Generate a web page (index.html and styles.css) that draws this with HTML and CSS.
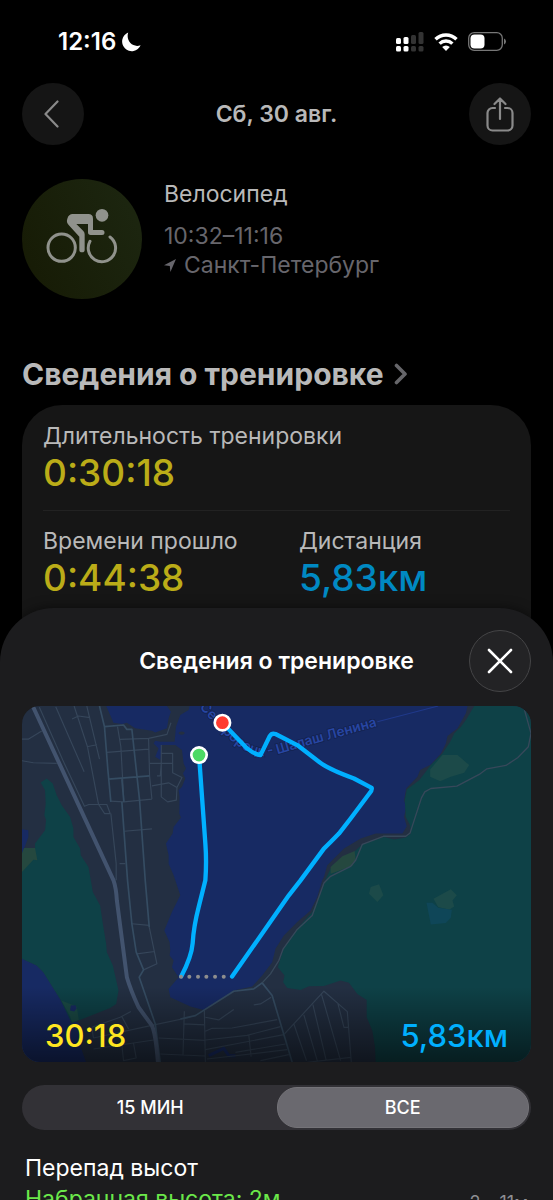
FILE: index.html
```html
<!DOCTYPE html>
<html lang="ru">
<head>
<meta charset="utf-8">
<meta name="viewport" content="width=device-width, initial-scale=1">
<title>Сведения о тренировке</title>
<link rel="stylesheet" href="styles.css">
</head>
<body>
<main class="summary">
  <div class="status">
    <div class="status-time">12:16
      <svg width="20" height="20" viewBox="0 0 20 20" aria-hidden="true"><path d="M7.200.6A9.600 9.600 0 1 0 19.600 13.200C12 16.200 4.500 9 7.200.6Z" fill="#fff"/></svg>
    </div>
    <div class="status-icons">
      <svg width="28" height="20" viewBox="0 0 28 20" aria-hidden="true">
        <g fill="#fff"><rect x="0" y="6" width="5" height="6" rx="1.500"/><rect x="7.500" y="5" width="5" height="7" rx="1.500"/><rect x="0" y="14" width="5" height="5.500" rx="1.500"/><rect x="7.500" y="14" width="5" height="5.500" rx="1.500"/></g>
        <g fill="#333"><rect x="15" y="3" width="5" height="9" rx="1.500"/><rect x="22.500" y="0" width="5" height="12" rx="1.500"/><rect x="15" y="14" width="5" height="5.500" rx="1.500"/><rect x="22.500" y="14" width="5" height="5.500" rx="1.500"/></g>
      </svg>
      <svg width="24" height="18" viewBox="0 0 24 18" aria-hidden="true"><g fill="none" stroke="#fff" stroke-width="3.400"><path d="M1.500 6.300a15 15 0 0 1 21 0"/><path d="M5.600 10.600a9.200 9.200 0 0 1 12.800 0"/></g><path d="M12 18l-3.800-3.900a5.400 5.400 0 0 1 7.600 0Z" fill="#fff"/></svg>
      <svg width="39" height="19" viewBox="0 0 39 19" aria-hidden="true"><rect x=".7" y=".7" width="33.600" height="17.600" rx="5.500" fill="none" stroke="#777" stroke-width="1.300"/><rect x="2.500" y="2.500" width="14" height="14" rx="4" fill="#fff"/><path d="M36 6.500q2 1 2 3t-2 3Z" fill="#777"/></svg>
    </div>
  </div>

  <header class="bar">
    <button class="round" aria-label="Назад"><svg width="18" height="28" viewBox="0 0 18 28"><path d="M13.500 1.500 1.500 14l12 12.500" fill="none" stroke="#8a8a8a" stroke-width="2.200" stroke-linecap="round" stroke-linejoin="round"/></svg></button>
    <h1 class="bar-title dim">Сб, 30 авг.</h1>
    <button class="round" aria-label="Поделиться"><svg width="28" height="35" viewBox="0 0 28 35"><g fill="none" stroke="#8a8a8a" stroke-width="2.200" stroke-linecap="round" stroke-linejoin="round"><path d="M9 11H6.500A5 5 0 0 0 1.500 16v12.500a5 5 0 0 0 5 5h15a5 5 0 0 0 5-5V16a5 5 0 0 0-5-5H19M14 22V1.500M8.500 7 14 1.500 19.500 7"/></g></svg></button>
  </header>

  <section class="activity">
    <div class="badge">
      <svg width="72" height="56" viewBox="77 115 216 166" aria-hidden="true">
        <g fill="none" stroke="#90928c" stroke-width="9" stroke-linecap="round"><circle cx="124" cy="233" r="41"/><path d="M209 214A41 41 0 1 0 269 201"/></g>
        <g fill="#90928c"><circle cx="245" cy="136" r="19"/><path d="M157 132H204Q218 132 218 146V180H245A7.500 7.500 0 0 1 245 195H211Q203 195 203 187V162H168L189 183Q193 187 193 193V239A8 8 0 0 1 177 239V200L145 165Q137 156 141 146Q145 132 157 132Z"/></g>
      </svg>
    </div>
    <div class="activity-text">
      <p class="dim activity-name">Велосипед</p>
      <p>10:32–11:16</p>
      <p class="place"><svg width="12" height="13" viewBox="0 0 12 13" aria-hidden="true"><path d="M12 0 0 6.200l5.800.8.6 6Z" fill="#67666c"/></svg>Санкт-Петербург</p>
    </div>
  </section>

  <h2 class="heading dim">Сведения о тренировке <svg width="14" height="22" viewBox="0 0 14 22" aria-hidden="true"><path d="M2.500 2.500 11 11l-8.500 8.500" fill="none" stroke="#66666a" stroke-width="3.600" stroke-linecap="round" stroke-linejoin="round"/></svg></h2>

  <section class="card">
    <div class="metric metric-wide"><p class="dim">Длительность тренировки</p><p class="value yellow">0:30:18</p></div>
    <div class="metric"><p class="dim">Времени прошло</p><p class="value yellow">0:44:38</p></div>
    <div class="metric"><p class="dim">Дистанция</p><p class="value blue">5,83км</p></div>
  </section>
</main>

<section class="sheet" role="dialog" aria-labelledby="sheet-title">
  <header class="bar">
    <span></span>
    <h2 class="bar-title" id="sheet-title">Сведения о тренировке</h2>
    <button class="round close" aria-label="Закрыть"><svg width="26" height="26" viewBox="0 0 26 26"><path d="M2 2 24 24M24 2 2 24" stroke="#fff" stroke-width="2.600" stroke-linecap="round"/></svg></button>
  </header>

  <div class="map">
    <svg class="map-art" viewBox="0 0 1524 1067" preserveAspectRatio="xMidYMid slice" role="img" aria-label="Маршрут тренировки">
      <defs>
        <linearGradient id="fade" x1="0" y1="0" x2="0" y2="1"><stop offset="0" stop-color="#000" stop-opacity="0"/><stop offset="1" stop-color="#000" stop-opacity=".55"/></linearGradient>
        <path id="ferry" d="M532 6L580 56Q650 140 720 150Q760 148 800 134L1064 60"/>
      </defs>
      <rect width="1524" height="1067" fill="#232f42"/>
      <g fill="#172a63">
        <path d="M502 0L499 12 474 27 461 62 457 107 414 107 399 104 394 112 409 127 399 152 414 162 419 117 459 117 479 132 484 172 491 187 482 202 489 217 479 242 469 252 472 272 471 322 476 334 454 362 451 382 431 412 439 447 439 472 454 507 459 522 474 567 449 617 426 672 442 707 444 732 442 747 454 762 449 782 469 812 439 847 444 872 504 900 544 910 569 897 634 852 689 840 719 807 749 767 759 727 784 687 824 647 864 612 884 572 899 522 904 512 914 477 964 427 1014 397 1059 382 1139 382 1152 360 1144 332 1150 302 1144 282 1150 247 1184 212 1192 192 1224 175 1254 142 1269 112 1274 90 1304 67 1329 22 1334 0Z"/>
        <path d="M252 0L264 27 274 50 299 54 314 50 339 67 389 74 399 79 434 67 439 37 446 17 434 0Z"/>
        <path d="M0 757L44 777 64 797 114 877 144 932 172 950 176 1022 192 1067H0Z"/>
      </g>
      <ellipse cx="478" cy="81" rx="9" ry="5" fill="#232f42"/>
      <g fill="#0e4147">
        <path d="M1354 0L1329 42 1314 62 1294 82 1282 107 1259 142 1224 177 1209 197 1189 222 1152 250 1146 282 1149 332 1162 357 1164 382 1149 394 1114 400 1084 392 1019 414 994 437 929 477 912 512 894 562 869 617 824 667 784 722 766 782 786 807 782 827 794 844 834 850 859 839 904 838 954 822 979 829 1004 862 1032 880 1032 932 1049 972 1057 1022 1059 1067H1524V0Z"/>
        <path d="M74 217L92 232 104 267 119 297 144 332 154 367 154 392 174 427 176 447 199 482 206 522 212 557 234 597 242 652 252 712 254 737 272 777 289 852 282 892 264 904 194 932 149 950 114 877 64 797 44 777 0 757V430L39 432 39 412 69 372 72 342 67 327 71 292 69 252 56 229Z"/>
      </g>
      <path d="M0 369L19 372 19 392 9 420 0 442Z" fill="#172a63"/>
      <path d="M6 425H39L46 462 34 460 14 482 0 497V442Z" fill="#25483f"/>
      <path d="M118 882L144 930 150 948 170 940 164 900Z" fill="#1a4a45"/>
      <path d="M146 897L160 896 164 905 156 915 144 912Z" fill="#172a63"/>
      <g fill="#1c4a49"><path d="M1259 147L1304 147 1339 177 1324 200 1284 212 1252 225 1222 212 1222 190Z"/><path d="M1044 542L1069 534 1082 567 1064 587 1039 562Z"/><path d="M1232 577L1284 549 1302 567 1289 582 1294 600 1279 610 1246 602Z"/></g>
      <path d="M959 450L996 434 999 462 989 479 924 502 924 482Z" fill="#25483f"/>
      <path d="M1211 589L1229 589 1246 604 1287 610 1284 634 1269 650 1224 654Z" fill="#0f4658"/>
      <path d="M559 1047L604 1025 619 1047H639" fill="none" stroke="#172a63" stroke-width="9"/>

      <g fill="none" stroke="#36465a" stroke-width="3.500" stroke-linejoin="round">
        <path d="M52 4L122 162 187 300 200 295 254 295 264 322 247 322 229 294M101 2L186 197M156 0L196 122 229 294M194 0L232 159M150 39L169 30 204 35M194 122L224 116"/>
        <path d="M286 62L296 122 305 287M294 100L379 97 434 85 446 50M254 139L379 129M264 285L305 287 389 279M379 97L382 209 389 279"/>
        <path d="M417 117V272L436 287 462 282 464 244 479 214 451 200V142H417M382 172H451M389 239L439 230 464 244M404 209H414L417 172"/>
        <path d="M306 375L389 368M266 322L282 472V522M292 472H309M329 652L381 657M344 742L397 735M381 662L404 772 364 790"/>
        <path d="M0 99H20L59 75M0 164L34 170 104 172"/>
        <path d="M209 962L294 932 326 915M214 994L399 954 504 932M209 962L214 994M299 930L319 967M214 1027L394 1000M409 994L548 1001M334 1010L342 1054 304 1062 299 1015M414 1042L548 1048M486 914L482 1045M486 952L548 955"/>
        <path d="M546 912L549 1067M549 932L589 940 634 909M549 974L569 965 629 964 764 939M549 1000L674 986 774 960M549 1029L784 984M639 1037L789 1012M554 1057L794 1029M679 985L686 1050M694 895L714 892 746 872M714 1062L799 1044"/>
        <path d="M786 982L904 854 974 915 986 1067M814 952L852 1062M844 925L884 1062M871 894L911 1062M897 864L954 1062M946 892L964 962H977M854 1067L984 1052"/>
      </g>
      <g fill="none" stroke="#354c62" stroke-width="5" stroke-linejoin="round">
        <path d="M232 0L247 62 257 190 266 287M247 62L304 57 314 70H329L352 282 369 522 381 662M259 219L344 212 382 209M299 219L305 287M299 287L316 522 329 652 342 737 364 790 351 812 399 952 414 1067"/>
        <path d="M474 937L519 927 634 854 694 847 719 829 749 867 809 1067"/>
      </g>
      <path d="M1504 10L1524 82 1516 122 1484 155 1449 178 1392 188 1369 205 1302 240 1224 247 1206 257 1196 275 1162 380 1149 390H1082L1019 414 999 462 984 480 924 510 904 530 869 627 824 669 782 727 769 762 744 802 719 829" fill="none" stroke="#37485a" stroke-width="4" stroke-linejoin="round"/>
      <path d="M32 0L274 522Q282 545 284 582L314 812Q325 850 349 902L389 957Q400 980 407 1067" fill="none" stroke="#42536e" stroke-width="12"/>

      <path d="M1064 47L1246 0" stroke="#20398a" stroke-width="3"/>
      <text class="map-label"><textPath href="#ferry" startOffset="100%">Сестрорецк - Шалаш Ленина</textPath></text>

      <g fill="none" stroke="#00b0ff" stroke-width="13" stroke-linecap="round" stroke-linejoin="round">
        <path d="M530 147L549 412Q553 465 549 522L529 602Q514 660 511 710Q508 750 477 809"/>
        <path d="M600 50L674 127Q696 145 714 147L742 90Q748 80 759 84L824 117 889 167Q915 188 994 217L1047 245Q1049 252 1040 262L984 337 949 382Q920 412 904 427L834 522 799 567 764 617 629 810"/>
      </g>
      <g fill="#8e8e8e"><circle cx="476" cy="811" r="6"/><circle cx="501" cy="811" r="6"/><circle cx="527" cy="811" r="6"/><circle cx="552" cy="811" r="6"/><circle cx="578" cy="811" r="6"/><circle cx="604" cy="811" r="6"/></g>
      <g stroke="#fff" stroke-width="8"><circle cx="600" cy="50" r="23" fill="#ff3b30"/><circle cx="530" cy="147" r="23" fill="#4cd964"/></g>
      <rect y="840" width="1524" height="227" fill="url(#fade)"/>
    </svg>
    <div class="map-stats"><span class="map-time">30:18</span><span class="map-distance">5,83км</span></div>
  </div>

  <div class="segments" role="group" aria-label="Период">
    <button class="segment" aria-pressed="false">15 МИН</button>
    <button class="segment selected" aria-pressed="true">ВСЕ</button>
  </div>

  <div class="elevation">
    <h3 class="elevation-title">Перепад высот</h3>
    <div class="elevation-row"><span class="gain">Набранная высота: 2м</span><span class="range">2 – 11м</span></div>
  </div>
</section>
</body>
</html>
```
FILE: styles.css
```css
* { box-sizing: border-box; }

body {
  margin: 0;
  height: 100vh;
  overflow: hidden;
  display: flex;
  flex-direction: column;
  background: #000;
  color: #fff;
  font: 23px/29px Inter, "Noto Sans", sans-serif;
}

h1, h2, h3, p { margin: 0; font: inherit; }
button { border: 0; padding: 0; font: inherit; color: inherit; }
svg { display: block; flex: none; }

.dim { color: #b9b9b9; }
.yellow { color: #bbac18; }
.blue { color: #0089c3; }

.summary { flex: none; padding: 0 22px; }

.status {
  height: 83px;
  padding: 0 24px 0 36px;
  display: flex;
  align-items: center;
  justify-content: space-between;
}
.status-time { display: flex; align-items: center; gap: 5px; font-size: 24px; font-weight: 600; }
.status-icons { display: flex; align-items: center; gap: 10px; }

.bar {
  display: grid;
  grid-template-columns: 62px 1fr 62px;
  align-items: center;
}
.bar-title { text-align: center; font-weight: 600; }

.round {
  width: 62px;
  height: 62px;
  border-radius: 50%;
  background: #151515;
  display: flex;
  align-items: center;
  justify-content: center;
}
.close { background: #232325; border: 1px solid #454547; }

.activity {
  margin-top: 34px;
  display: flex;
  gap: 22px;
}
.badge {
  flex: none;
  width: 120px;
  height: 120px;
  padding-bottom: 6px;
  border-radius: 50%;
  background: linear-gradient(65deg, #161a04, #1d2711);
  display: flex;
  align-items: center;
  justify-content: center;
}
.activity-text { padding-top: 1px; color: #67666c; }
.activity-name { margin-bottom: 13px; }
.place { display: flex; align-items: center; gap: 8px; }

.heading {
  margin-top: 57px;
  display: flex;
  align-items: center;
  gap: 10px;
  font-size: 30px;
  line-height: 36px;
  font-weight: 700;
}

.card {
  margin-top: 13px;
  padding: 17px 21px 84px;
  border-radius: 40px;
  background: #161616;
  display: grid;
  grid-template-columns: 1fr 1fr;
  column-gap: 45px;
}
.metric-wide {
  grid-column: 1 / -1;
  margin-bottom: 16px;
  padding-bottom: 15px;
  border-bottom: 1px solid #222;
}
.value { font-size: 37px; line-height: 44px; font-weight: 500; }

.sheet {
  flex: 1;
  min-height: 0;
  margin-top: -76px;
  padding: 22px 22px 0;
  border-radius: 54px 54px 0 0;
  background: #1c1c1e;
  box-shadow: 0 0 12px #0008;
  overflow: hidden;
}

.map {
  margin-top: 14px;
  border-radius: 18px;
  overflow: hidden;
  display: grid;
}
.map-art, .map-stats { grid-area: 1 / 1; }
.map-art { width: 100%; }
.map-label {
  font-size: 41px;
  font-weight: 600;
  fill: #2746a3;
  stroke: #14224f;
  stroke-width: 5px;
  paint-order: stroke;
  text-anchor: end;
}
.map-stats {
  position: relative;
  align-self: end;
  padding: 0 23px 8px;
  display: flex;
  justify-content: space-between;
  font-size: 31px;
  line-height: 36px;
  font-weight: 500;
}
.map-time { color: #ffe620; }
.map-distance { color: #00b0ff; }

.segments {
  margin-top: 23px;
  height: 45px;
  padding: 2px;
  border-radius: 23px;
  background: #323136;
  display: grid;
  grid-template-columns: 1fr 1fr;
}
.segment {
  border-radius: 20px;
  background: none;
  font-size: 18px;
  font-weight: 500;
}
.selected { background: #6a696f; border: 1px solid #747378; }

.elevation { padding: 24px 3px 0; }
.elevation-row {
  margin-top: 2px;
  display: flex;
  justify-content: space-between;
  white-space: nowrap;
}
.gain { color: #6be84a; }
.range { padding-top: 3px; color: #8e8e93; font-size: 18px; }
```
